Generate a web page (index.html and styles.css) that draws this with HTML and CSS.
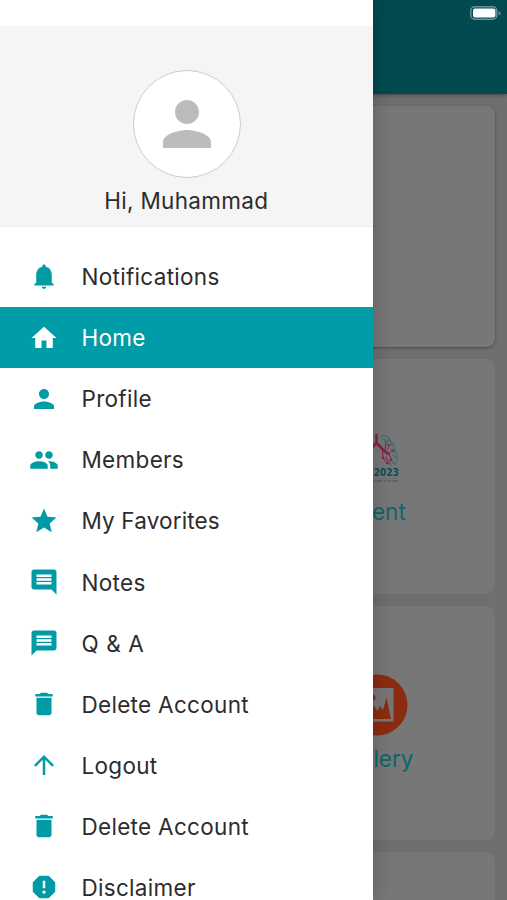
FILE: index.html
```html
<!DOCTYPE html>
<html lang="en">
<head>
<meta charset="utf-8">
<title>Menu</title>
<link rel="stylesheet" href="styles.css">
</head>
<body>
<div class="screen">
  <div class="page">
    <header class="appbar">
      <svg class="battery" width="31" height="14" viewBox="0 0 31 14"><rect x=".8" y=".8" width="26" height="12.4" rx="4" fill="none" stroke="#6c9396" stroke-width="1.5"/><rect x="3" y="2.6" width="22.4" height="8.8" rx="2" fill="#fff"/><path d="M28.6 5v4.4q2-.8 2-2.2t-2-2.2z" fill="#6c9396"/></svg>
    </header>
    <main class="cards">
      <section class="card banner"></section>
      <section class="card"></section>
      <section class="card">
        <svg class="picture" width="62" height="62" viewBox="0 0 62 62">
          <g fill="none" stroke="#8a1f4a" stroke-linecap="round"><path stroke-width="2.600" d="M30.500 8v8l-5 5M30.500 16l8 8 4 3"/><path stroke-width="1" d="M36 21l1 9 4 6M39 24l1-9M43 27l4-5M43 27l3 6M40 30l4 8M41 23l4-6M25 21l-7 7"/></g>
          <g fill="none" stroke="#3b6a6c" stroke-width=".9"><path d="M34 10q5-3 9 1t7 14q3 8-1 12-5-1-8-4"/><path d="M36 11l5 5 2-4 3 6 3-1M44 22l5 2-2 5 4 2M43 33l4 1 2 4M38 12l4 2"/></g>
          <g fill="#8a1f4a"><circle cx="37" cy="31" r="1.200"/><circle cx="41" cy="36" r="1.200"/><circle cx="45" cy="33" r="1.200"/><circle cx="47" cy="24" r="1"/><circle cx="42" cy="18" r="1"/></g>
          <text class="year" x="27.500" y="48.500" textLength="25.500" lengthAdjust="spacingAndGlyphs">2023</text>
          <path d="M10 51.500h42" stroke="#666b6b" stroke-width=".6"/><path d="M10 54h42" stroke="#515151" stroke-width="1" stroke-dasharray="4 1 6 1.500 2 1"/>
        </svg>
        <span>Event</span>
      </section>
      <section class="card"></section>
      <section class="card">
        <svg class="picture" width="62" height="62" viewBox="0 0 62 62"><circle cx="31" cy="31" r="30.500" fill="#8a2c11"/><path fill="#777" d="M14 14h33.500v33.500H14z"/><circle cx="26.500" cy="23.500" r="3" fill="#8a2c11"/><path fill="#8a2c11" d="M17 45V30l6 4 5-2 3.500 5 2.500-5 3 4 3.500-12.500L45 45z"/></svg>
        <span>Gallery</span>
      </section>
      <section class="card"></section>
      <section class="card"></section>
    </main>
  </div>
  <aside class="drawer">
    <div class="profile">
      <div class="avatar"><svg width="72" height="72" viewBox="0 0 24 24"><path d="M12 12c2.210 0 4-1.790 4-4s-1.790-4-4-4-4 1.790-4 4 1.790 4 4 4zm0 2c-2.670 0-8 1.340-8 4v2h16v-2c0-2.660-5.330-4-8-4z"/></svg></div>
      <div class="hello">Hi, Muhammad</div>
    </div>
    <nav class="menu">
      <a class="item"><svg viewBox="0 0 24 24"><path d="M10.200 19.700h3.600c0 1-.8 1.700-1.800 1.700s-1.800-.7-1.800-1.700zM18.200 16.300V10c0-3.100-1.900-5.600-4.800-6.300v-.4C13.400 2.500 12.800 2 12 2s-1.400.5-1.400 1.300v.4C7.700 4.400 5.800 6.900 5.800 10v6.300L4.200 18v.8h15.600V18z"/></svg><span>Notifications</span></a>
      <a class="item active"><svg viewBox="0 0 24 24"><path d="M10 20v-6h4v6h5v-8h3L12 3 2 12h3v8z"/></svg><span>Home</span></a>
      <a class="item"><svg viewBox="0 0 24 24"><path d="M12 12c2.210 0 4-1.790 4-4s-1.790-4-4-4-4 1.790-4 4 1.790 4 4 4zm0 2c-2.670 0-8 1.340-8 4v2h16v-2c0-2.660-5.330-4-8-4z"/></svg><span>Profile</span></a>
      <a class="item"><svg viewBox="0 0 24 24"><path d="M16 11c1.660 0 2.990-1.340 2.990-3S17.660 5 16 5c-1.660 0-3 1.340-3 3s1.340 3 3 3zm-8 0c1.660 0 2.990-1.340 2.990-3S9.660 5 8 5C6.340 5 5 6.340 5 8s1.340 3 3 3zm0 2c-2.330 0-7 1.170-7 3.500V19h14v-2.500c0-2.330-4.670-3.500-7-3.500zm8 0c-.29 0-.62.020-.97.050 1.160.84 1.970 1.970 1.970 3.450V19h6v-2.500c0-2.330-4.670-3.500-7-3.500z"/></svg><span>Members</span></a>
      <a class="item tight"><svg viewBox="0 0 24 24"><path d="M12 17.270L18.180 21l-1.640-7.030L22 9.240l-7.190-.61L12 2 9.190 8.630 2 9.240l5.460 4.730L5.820 21z"/></svg><span>My Favorites</span></a>
      <a class="item"><svg viewBox="0 0 24 24"><path d="M21.990 4c0-1.100-.89-2-1.990-2H4c-1.100 0-2 .9-2 2v12c0 1.100.9 2 2 2h14l4 4-.01-18zM18 14H6v-2h12v2zm0-3H6V9h12v2zm0-3H6V6h12v2z"/></svg><span>Notes</span></a>
      <a class="item loose"><svg viewBox="0 0 24 24"><path d="M20 2H4c-1.100 0-1.990.9-1.990 2L2 22l4-4h14c1.100 0 2-.9 2-2V4c0-1.100-.9-2-2-2zm-2 12H6v-2h12v2zm0-3H6V9h12v2zm0-3H6V6h12v2z"/></svg><span>Q &amp; A</span></a>
      <a class="item"><svg viewBox="0 0 24 24"><path d="M6 19c0 1.100.9 2 2 2h8c1.100 0 2-.9 2-2V7H6v12zM19 4h-3.500l-1-1h-5l-1 1H5v2h14V4z"/></svg><span>Delete Account</span></a>
      <a class="item"><svg viewBox="0 0 24 24"><path d="M4 12l1.410 1.410L11 7.830V20h2V7.830l5.580 5.590L20 12l-8-8-8 8z"/></svg><span>Logout</span></a>
      <a class="item"><svg viewBox="0 0 24 24"><path d="M6 19c0 1.100.9 2 2 2h8c1.100 0 2-.9 2-2V7H6v12zM19 4h-3.500l-1-1h-5l-1 1H5v2h14V4z"/></svg><span>Delete Account</span></a>
      <a class="item"><svg viewBox="0 0 24 24"><path fill-rule="evenodd" d="M15.730 3H8.270L3 8.270v7.460L8.270 21h7.460L21 15.730V8.270L15.730 3zM12 17.300c-.72 0-1.300-.58-1.300-1.300s.58-1.300 1.300-1.300 1.300.58 1.300 1.300-.58 1.300-1.300 1.300zm1-4.300h-2V7h2v6z"/></svg><span>Disclaimer</span></a>
    </nav>
  </aside>
</div>
</body>
</html>
```
FILE: styles.css
```css
* { box-sizing: border-box; }
body { margin: 0; font-family: Inter, "Liberation Sans", sans-serif; }
.screen { position: relative; width: 507px; height: 900px; overflow: hidden; background: #6f6f6f; }
.appbar { height: 94px; padding: 6px 6px; display: flex; justify-content: flex-end; background: #004a50; box-shadow: 0 1px 4px rgba(0, 0, 0, .4); }
.cards { display: grid; grid-template-columns: 1fr 1fr; grid-template-rows: 241px 235px 234px 234px; gap: 12px; padding: 12px 12.500px; }
.card { display: flex; flex-direction: column; align-items: center; padding-top: 68px; border-radius: 8px; background: #777; box-shadow: 0 0 2px rgba(0, 0, 0, .06); color: #0f6569; font-size: 22.500px; line-height: 28px; }
.card span { margin-right: 2px; }
.banner { grid-column: 1 / -1; box-shadow: 0 1px 3px rgba(0, 0, 0, .35); }
.picture { margin-bottom: 9px; }
.year { font-family: "DejaVu Sans", sans-serif; font-weight: bold; font-size: 10.500px; fill: #084f55; }
.drawer { position: absolute; top: 0; left: 0; width: 372.500px; height: 900px; padding-top: 26px; background: #fff; box-shadow: 0 0 20px rgba(0, 0, 0, .22); }
.profile { height: 201px; padding-top: 44px; display: flex; flex-direction: column; align-items: center; background: #f5f5f5; border-bottom: 1px solid #eee; }
.avatar { width: 108px; height: 108px; margin-left: 1.500px; display: grid; place-items: center; border: 1px solid #ccc; border-radius: 50%; background: #fff; fill: #bcbcbc; }
.hello { margin-top: 8px; font-size: 22.500px; line-height: 30px; letter-spacing: .3px; color: #2c2c2e; }
.menu { padding-top: 19px; }
.item { height: 61.100px; padding-left: 28.500px; display: flex; align-items: center; gap: 23px; color: #2c2c2e; font-size: 22.500px; letter-spacing: .3px; white-space: nowrap; }
.item svg { width: 30px; height: 30px; fill: #009ba5; }
.item.active { color: #fff; background: #009ca8; }
.item.active svg { fill: #fff; }
.item.tight { letter-spacing: .15px; }
.item.loose { letter-spacing: .6px; }
```
